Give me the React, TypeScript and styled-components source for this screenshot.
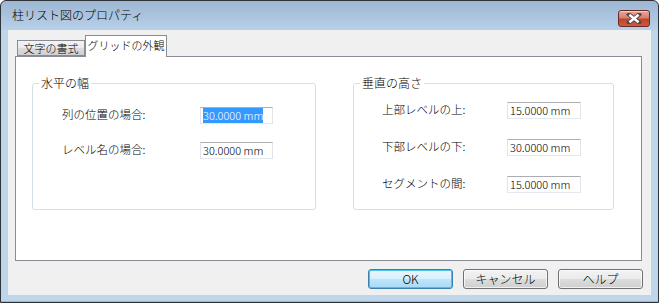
import styled, { createGlobalStyle } from 'styled-components'

const GlobalStyle = createGlobalStyle`
    html, body {
        margin: 0;
        padding: 0;
        background: #ffffff;
    }
    body {
        font-family: "Noto Sans CJK JP", "Noto Sans", sans-serif;
        font-size: 12px;
        font-weight: 300;
        color: #000000;
    }
`

const Window = styled.div`
    box-sizing: border-box;
    width: 659px;
    height: 303px;
    display: flex;
    flex-direction: column;
    border: 1px solid #2e3338;
    border-radius: 6px 6px 0 0;
    background: linear-gradient(180deg, #9db6d2 0px, #b8d0e9 29px, #bfd5ec 30px, #bfd5ec 100%);
    box-shadow: inset 0 -1px 0 #6fc6ea;
    overflow: hidden;
`

const TitleBar = styled.div`
    height: 29px;
    display: flex;
    align-items: flex-start;
    justify-content: space-between;
    padding: 0 8px 0 11px;
`

const Title = styled.span`
    margin-top: 7px;
    font-size: 12px;
    line-height: 14px;
    color: #000000;
`

const CloseButton = styled.div`
    box-sizing: border-box;
    margin-top: 9px;
    width: 32px;
    height: 17px;
    border: 1px solid #6a2a2a;
    border-radius: 3px;
    background: linear-gradient(180deg, #e8a597 0%, #d7826f 45%, #c0432b 55%, #cf5a3d 100%);
    box-shadow: inset 0 1px 0 rgba(255, 255, 255, 0.45);
    display: flex;
    align-items: center;
    justify-content: center;
`

const Client = styled.div`
    box-sizing: border-box;
    margin: 0 7px 7px 7px;
    height: 265px;
    background: #f0f0f0;
    padding: 5px 8px 0 7px;
    display: flex;
    flex-direction: column;
`

const TabStrip = styled.div`
    display: flex;
    align-items: flex-end;
    height: 21px;
    padding-left: 2px;
`

const Tab = styled.div<{ $active?: boolean; $width: number }>`
    box-sizing: border-box;
    width: ${({ $width }) => $width}px;
    height: ${({ $active }) => ($active ? '22px' : '16px')};
    margin-bottom: ${({ $active }) => ($active ? '-1px' : '0')};
    position: relative;
    z-index: ${({ $active }) => ($active ? 1 : 0)};
    border: 1px solid #898c95;
    border-bottom: ${({ $active }) => ($active ? 'none' : '1px solid #898c95')};
    background: ${({ $active }) =>
        $active ? '#ffffff' : 'linear-gradient(180deg, #f3f3f3 0%, #ebebeb 50%, #dddddd 51%, #cfcfcf 100%)'};
    display: flex;
    align-items: ${({ $active }) => ($active ? 'flex-start' : 'center')};
    justify-content: center;
    padding-top: ${({ $active }) => ($active ? '2px' : '0')};
    font-size: 11px;
    line-height: 14px;
    white-space: nowrap;
`

const Panel = styled.div`
    box-sizing: border-box;
    width: 627px;
    height: 205px;
    border: 1px solid #898c95;
    background: #ffffff;
    padding: 26px 0 0 16px;
    display: flex;
    align-items: flex-start;
    gap: 37px;
`

const Group = styled.div<{ $width: number }>`
    box-sizing: border-box;
    position: relative;
    width: ${({ $width }) => $width}px;
    height: 127px;
    border: 1px solid #d5dfe5;
    border-radius: 3px;
`

const Legend = styled.span`
    position: absolute;
    top: -8px;
    left: 6px;
    padding: 0 2px;
    background: #ffffff;
    font-size: 12px;
    line-height: 14px;
`

const Rows = styled.div<{ $top: number; $left: number; $gap: number; $label: number; $field: number }>`
    display: grid;
    grid-template-columns: ${({ $label, $field }) => `${$label}px ${$field}px`};
    grid-auto-rows: 17px;
    row-gap: ${({ $gap }) => $gap}px;
    padding: ${({ $top, $left }) => `${$top}px 0 0 ${$left}px`};
    align-items: center;
`

const Label = styled.span`
    font-size: 11.5px;
    line-height: 14px;
    white-space: nowrap;
    margin-top: -3px;
`

const Field = styled.div`
    box-sizing: border-box;
    height: 17px;
    border: 1px solid #e2e3ea;
    border-top-color: #abadb3;
    border-bottom-color: #e3e9ef;
    background: #ffffff;
    padding-left: 2px;
    font-size: 11px;
    line-height: 15px;
    white-space: nowrap;
    overflow: hidden;
`

const Selected = styled.span`
    background: #3399ff;
    color: #ffffff;
`

const ButtonRow = styled.div`
    display: flex;
    justify-content: flex-end;
    gap: 10px;
    margin-top: 8px;
`

const Button = styled.div<{ $primary?: boolean }>`
    box-sizing: border-box;
    width: 85px;
    height: 20px;
    border: 1px solid ${({ $primary }) => ($primary ? '#3c7fb1' : '#707070')};
    border-radius: 3px;
    background: ${({ $primary }) =>
        $primary
            ? 'linear-gradient(180deg, #eaf6fd 0%, #d9f0fc 50%, #bee6fd 51%, #a7d9f5 100%)'
            : 'linear-gradient(180deg, #f2f2f2 0%, #ebebeb 50%, #dddddd 51%, #cfcfcf 100%)'};
    box-shadow: ${({ $primary }) =>
        $primary ? 'inset 0 0 0 1px #48c3f0' : 'inset 0 0 0 1px rgba(255, 255, 255, 0.7)'};
    display: flex;
    align-items: center;
    justify-content: center;
    font-size: 12px;
    line-height: 14px;
`

const CloseGlyph = () => (
    <svg width="16" height="11" viewBox="0 0 16 11">
        <path d="M3 1.5 L13 9.5 M13 1.5 L3 9.5" stroke="#4a4a4a" strokeWidth="4.2" strokeLinecap="square" />
        <path d="M3.4 1.8 L12.6 9.2 M12.6 1.8 L3.4 9.2" stroke="#ffffff" strokeWidth="2.4" strokeLinecap="butt" />
    </svg>
)

export default function App() {
    return (
        <>
            <GlobalStyle />
            <Window>
                <TitleBar>
                    <Title>柱リスト図のプロパティ</Title>
                    <CloseButton>
                        <CloseGlyph />
                    </CloseButton>
                </TitleBar>
                <Client>
                    <TabStrip>
                        <Tab $width={68}>文字の書式</Tab>
                        <Tab $active $width={82}>グリッドの外観</Tab>
                    </TabStrip>
                    <Panel>
                        <Group $width={284}>
                            <Legend>水平の幅</Legend>
                            <Rows $top={23} $left={29} $gap={18} $label={138} $field={73}>
                                <Label>列の位置の場合:</Label>
                                <Field>
                                    <Selected>30.0000 mm</Selected>
                                </Field>
                                <Label>レベル名の場合:</Label>
                                <Field>30.0000 mm</Field>
                            </Rows>
                        </Group>
                        <Group $width={261}>
                            <Legend>垂直の高さ</Legend>
                            <Rows $top={18} $left={28} $gap={20} $label={125} $field={74}>
                                <Label>上部レベルの上:</Label>
                                <Field>15.0000 mm</Field>
                                <Label>下部レベルの下:</Label>
                                <Field>30.0000 mm</Field>
                                <Label>セグメントの間:</Label>
                                <Field>15.0000 mm</Field>
                            </Rows>
                        </Group>
                    </Panel>
                    <ButtonRow>
                        <Button $primary>OK</Button>
                        <Button>キャンセル</Button>
                        <Button>ヘルプ</Button>
                    </ButtonRow>
                </Client>
            </Window>
        </>
    )
}
